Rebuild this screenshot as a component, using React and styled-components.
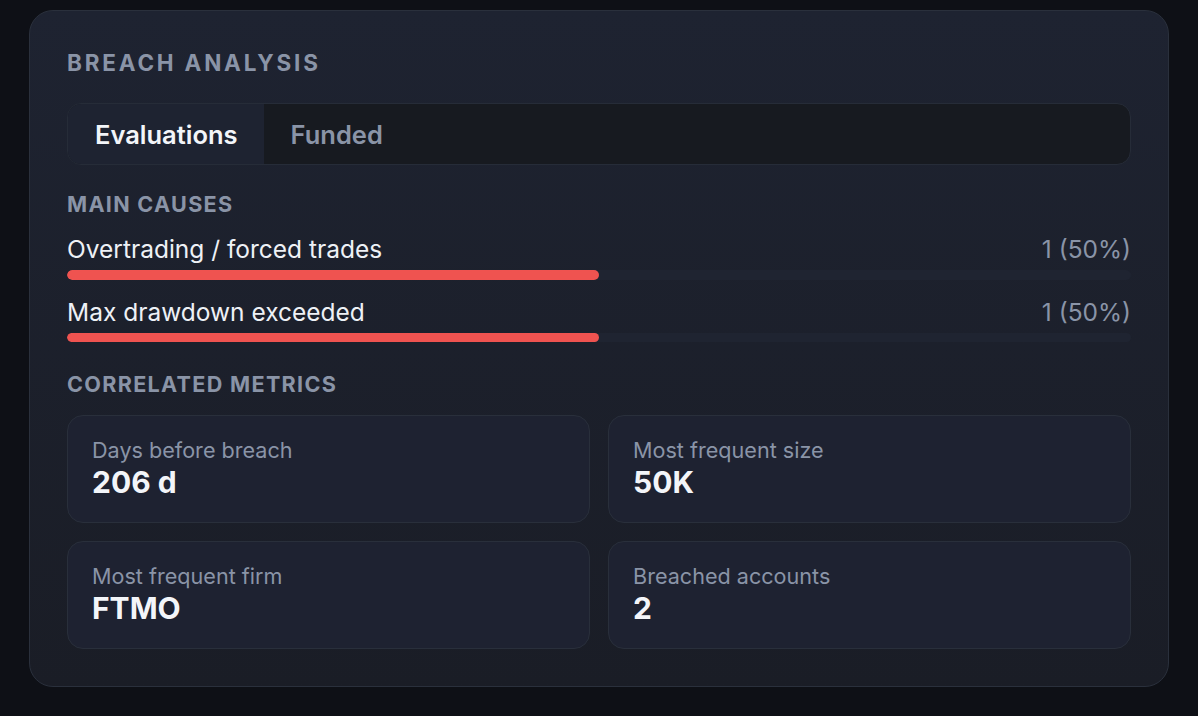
import styled, { createGlobalStyle } from "styled-components";

const GlobalStyle = createGlobalStyle`
  html, body {
    margin: 0;
    background: #0e1016;
    font-family: Inter, "Noto Sans", sans-serif;
  }
`;

const causes = [
  { label: "Overtrading / forced trades", count: 1, pct: 50 },
  { label: "Max drawdown exceeded", count: 1, pct: 50 },
];

const metrics = [
  { label: "Days before breach", value: "206 d" },
  { label: "Most frequent size", value: "50K" },
  { label: "Most frequent firm", value: "FTMO" },
  { label: "Breached accounts", value: "2" },
];

export default function App() {
  return (
    <>
      <GlobalStyle />
      <Page>
        <Panel>
          <Title>Breach analysis</Title>
          <Tabs>
            <Tab active>Evaluations</Tab>
            <Tab>Funded</Tab>
          </Tabs>

          <SectionLabel top={25}>Main causes</SectionLabel>
          <CauseList>
            {causes.map((c) => (
              <Cause key={c.label}>
                <CauseHead>
                  <CauseName>{c.label}</CauseName>
                  <CauseCount>
                    {c.count} ({c.pct}%)
                  </CauseCount>
                </CauseHead>
                <Track>
                  <Fill style={{ width: `${c.pct}%` }} />
                </Track>
              </Cause>
            ))}
          </CauseList>

          <SectionLabel top={28}>Correlated metrics</SectionLabel>
          <MetricGrid>
            {metrics.map((m) => (
              <Metric key={m.label}>
                <MetricLabel>{m.label}</MetricLabel>
                <MetricValue>{m.value}</MetricValue>
              </Metric>
            ))}
          </MetricGrid>
        </Panel>
      </Page>
    </>
  );
}

const Page = styled.div`
  padding: 10px 29px 28px 29px;
`;

const Panel = styled.div`
  box-sizing: border-box;
  width: 1140px;
  padding: 37px 37px 37px 37px;
  border: 1px solid #2a303c;
  border-radius: 24px;
  background: linear-gradient(180deg, #1e2331 0%, #1a1d26 100%);
`;

const Title = styled.h2`
  margin: 0 0 25px;
  font-size: 22.5px;
  line-height: 30px;
  font-weight: 700;
  letter-spacing: 2.8px;
  text-transform: uppercase;
  color: #8a94a7;
`;

const Tabs = styled.div`
  display: flex;
  height: 62px;
  box-sizing: border-box;
  border: 1px solid #262c38;
  border-radius: 14px;
  background: #171a20;
  overflow: hidden;
`;

const Tab = styled.div`
  display: flex;
  align-items: center;
  padding: 0 26px 0 27px;
  font-size: 25.5px;
  font-weight: 600;
  color: ${(p) => (p.active ? "#f3f5f9" : "#8a94a7")};
  background: ${(p) => (p.active ? "#1e2331" : "transparent")};
`;

const SectionLabel = styled.div`
  margin-top: ${(p) => p.top}px;
  font-size: 21.6px;
  line-height: 28px;
  font-weight: 700;
  letter-spacing: 1.3px;
  text-transform: uppercase;
  color: #8a94a7;
`;

const CauseList = styled.div`
  display: flex;
  flex-direction: column;
  gap: 16px;
  margin-top: 15px;
`;

const Cause = styled.div`
  display: flex;
  flex-direction: column;
  gap: 5px;
`;

const CauseHead = styled.div`
  display: flex;
  justify-content: space-between;
  align-items: baseline;
`;

const CauseName = styled.span`
  font-size: 24.5px;
  line-height: 32px;
  color: #eef1f6;
`;

const CauseCount = styled(CauseName)`
  color: #8a94a7;
`;

const Track = styled.div`
  height: 9.5px;
  border-radius: 999px;
  background: #1f2431;
  overflow: hidden;
`;

const Fill = styled.div`
  height: 100%;
  border-radius: 999px;
  background: #ef5350;
`;

const MetricGrid = styled.div`
  display: grid;
  grid-template-columns: 1fr 1fr;
  gap: 18px 18px;
  margin-top: 17px;
`;

const Metric = styled.div`
  box-sizing: border-box;
  height: 108px;
  padding: 20px 24px;
  border: 1px solid #292f3b;
  border-radius: 16px;
  background: #1e2231;
`;

const MetricLabel = styled.div`
  font-size: 21.6px;
  line-height: 28px;
  color: #8a94a7;
`;

const MetricValue = styled.div`
  font-size: 30px;
  line-height: 36px;
  font-weight: 700;
  color: #f3f5f9;
`;
